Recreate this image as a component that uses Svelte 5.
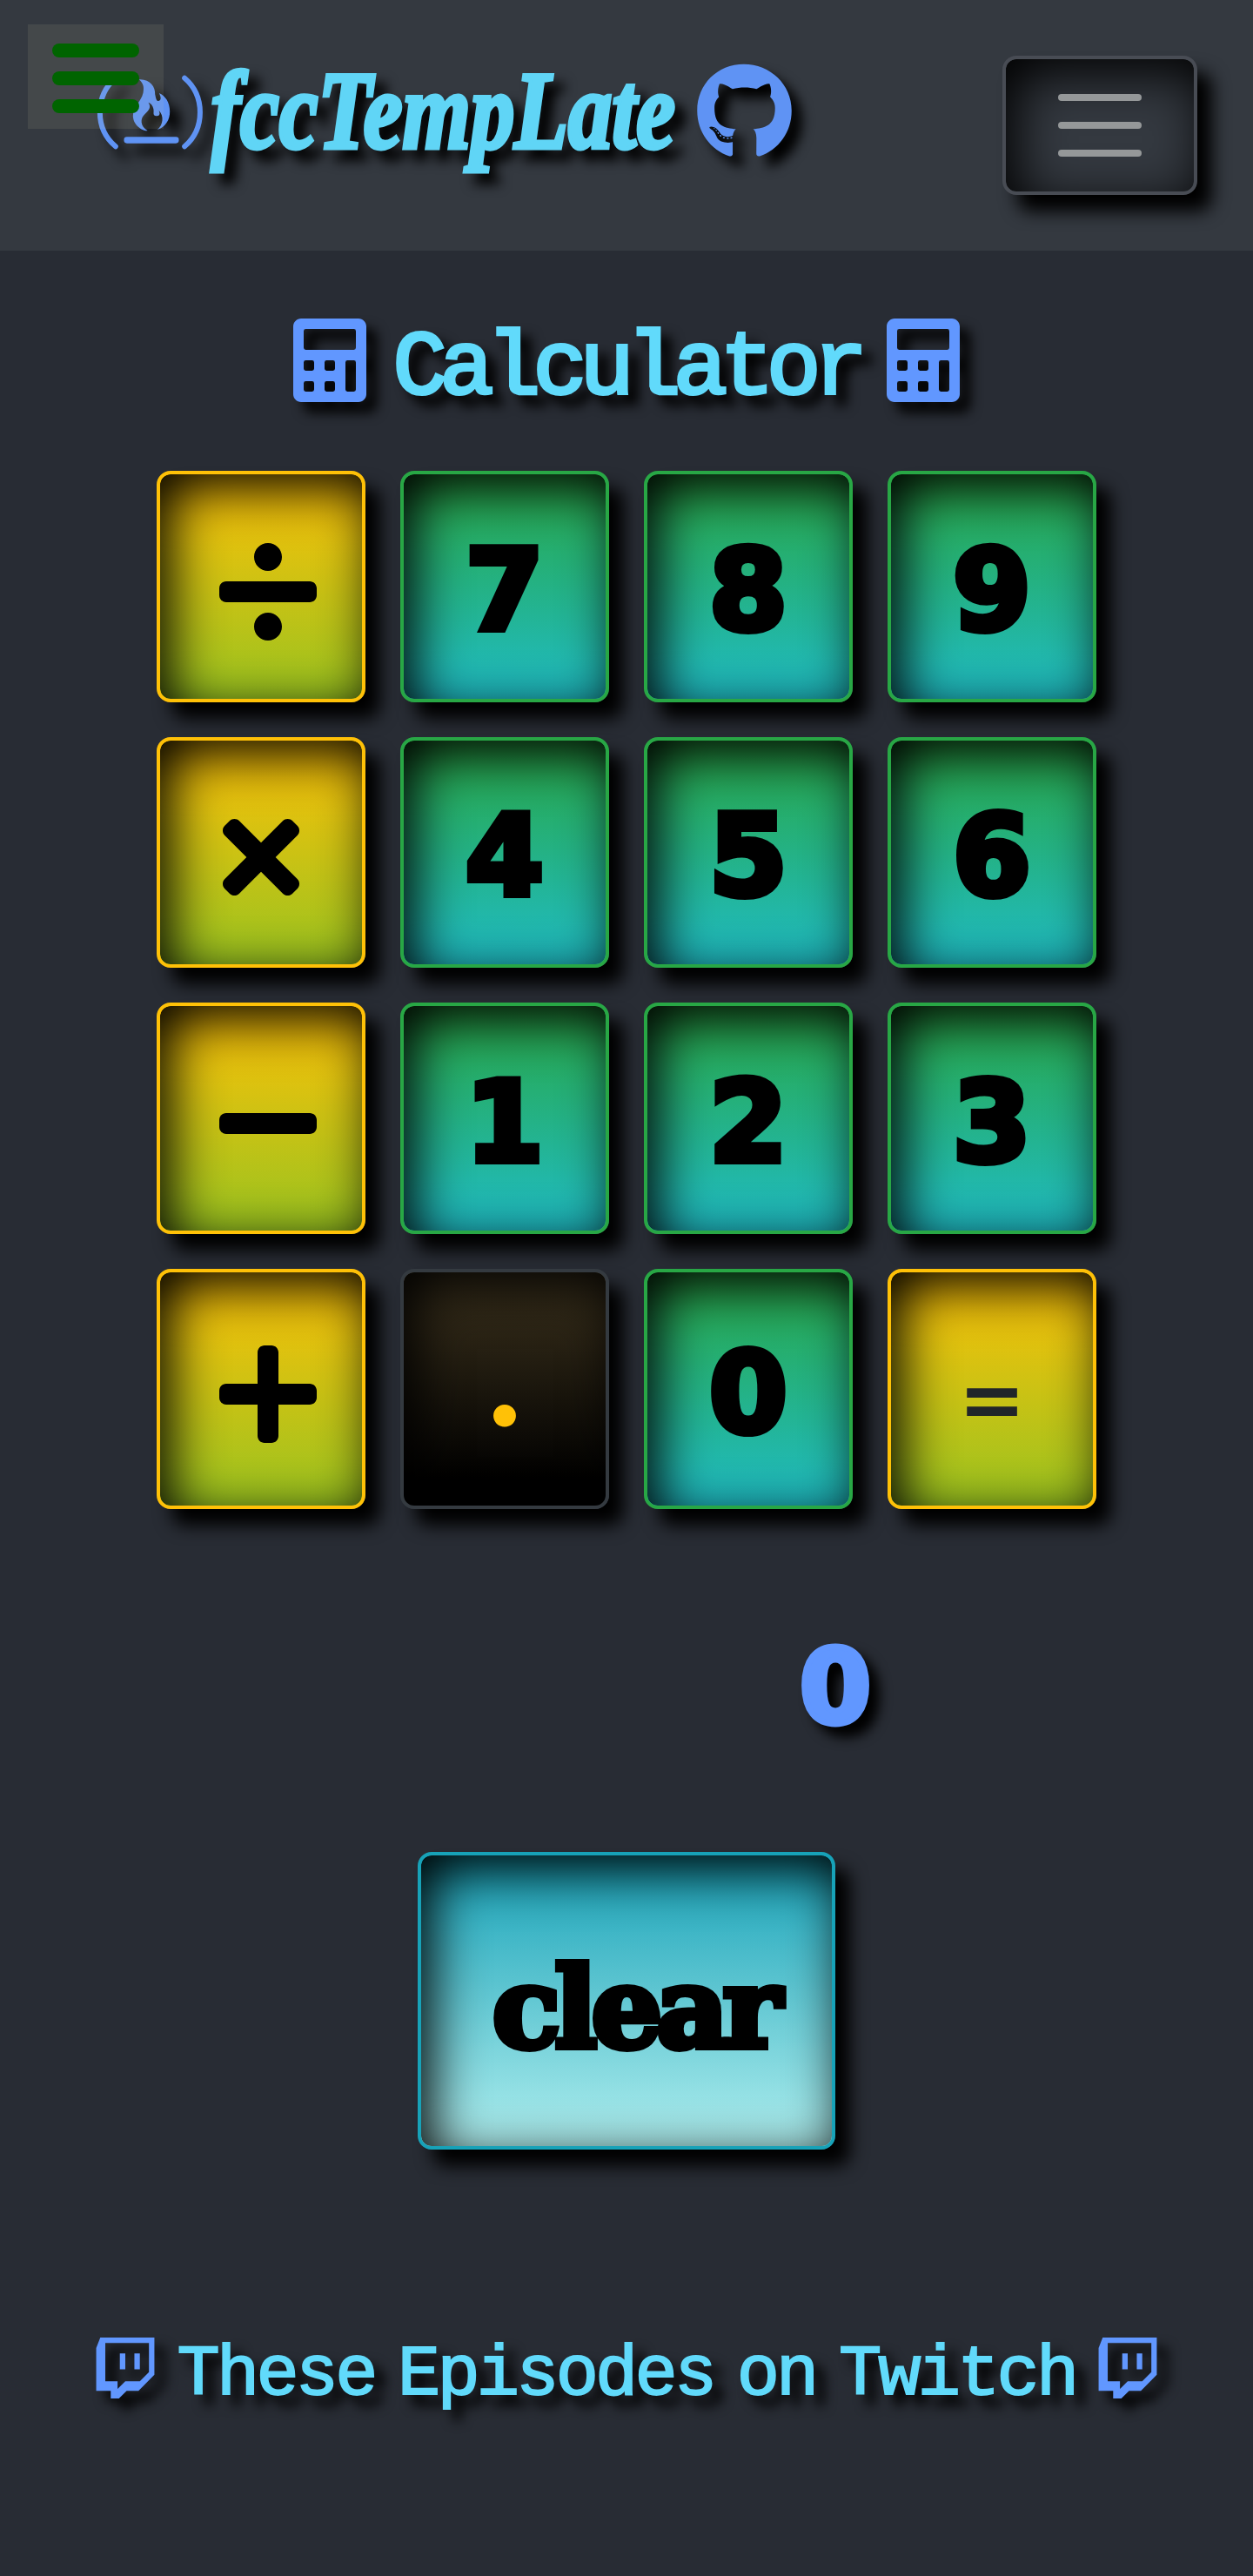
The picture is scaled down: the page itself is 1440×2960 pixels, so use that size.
<script>
  const DIVIDE =
    'M224 352c-35.35 0-64 28.65-64 64s28.65 64 64 64 64-28.65 64-64-28.65-64-64-64zm0-192c35.35 0 64-28.65 64-64s-28.65-64-64-64-64 28.65-64 64 28.65 64 64 64zm192 48H32c-17.67 0-32 14.33-32 32v32c0 17.67 14.33 32 32 32h384c17.67 0 32-14.33 32-32v-32c0-17.67-14.33-32-32-32z';
  const TIMES =
    'M242.72 256l100.07-100.07c12.28-12.28 12.28-32.19 0-44.48l-22.24-22.24c-12.28-12.28-32.19-12.28-44.48 0L176 189.28 75.93 89.21c-12.28-12.28-32.19-12.28-44.48 0L9.21 111.45c-12.28 12.28-12.28 32.19 0 44.48L109.28 256 9.21 356.07c-12.28 12.28-12.28 32.19 0 44.48l22.24 22.24c12.28 12.28 32.2 12.28 44.48 0L176 322.72l100.07 100.07c12.28 12.28 32.2 12.28 44.48 0l22.24-22.24c12.28-12.28 12.28-32.19 0-44.48L242.72 256z';
  const MINUS =
    'M416 208H32c-17.67 0-32 14.33-32 32v32c0 17.67 14.33 32 32 32h384c17.67 0 32-14.33 32-32v-32c0-17.67-14.33-32-32-32z';
  const PLUS =
    'M416 208H272V64c0-17.67-14.33-32-32-32h-32c-17.67 0-32 14.33-32 32v144H32c-17.67 0-32 14.33-32 32v32c0 17.67 14.33 32 32 32h144v144c0 17.67 14.33 32 32 32h32c17.67 0 32-14.33 32-32V304h144c17.67 0 32-14.33 32-32v-32c0-17.67-14.33-32-32-32z';

  const keys = [
    { kind: 'op', name: 'divide', icon: DIVIDE, width: 448 },
    { kind: 'digit', label: '7' },
    { kind: 'digit', label: '8' },
    { kind: 'digit', label: '9' },
    { kind: 'op', name: 'multiply', icon: TIMES, width: 352 },
    { kind: 'digit', label: '4' },
    { kind: 'digit', label: '5' },
    { kind: 'digit', label: '6' },
    { kind: 'op', name: 'subtract', icon: MINUS, width: 448 },
    { kind: 'digit', label: '1' },
    { kind: 'digit', label: '2' },
    { kind: 'digit', label: '3' },
    { kind: 'op', name: 'add', icon: PLUS, width: 448 },
    { kind: 'dot', label: '.' },
    { kind: 'digit', label: '0' },
    { kind: 'equals', label: '=' }
  ];
</script>

{#snippet calculatorIcon()}
  <svg class="calc-icon" viewBox="0 0 448 512" aria-hidden="true">
    <path
      fill-rule="evenodd"
      d="M400 0H48C22.4 0 0 22.4 0 48v416c0 25.6 22.4 48 48 48h352c25.6 0 48-22.4 48-48V48c0-25.6-22.4-48-48-48z
        M76.8 384h38.4q12.8 0 12.8 12.8v38.4q0 12.8-12.8 12.8H76.8q-12.8 0-12.8-12.8v-38.4q0-12.8 12.8-12.8z
        M76.8 256h38.4q12.8 0 12.8 12.8v38.4q0 12.8-12.8 12.8H76.8q-12.8 0-12.8-12.8v-38.4q0-12.8 12.8-12.8z
        M204.8 384h38.4q12.8 0 12.8 12.8v38.4q0 12.8-12.8 12.8h-38.4q-12.8 0-12.8-12.8v-38.4q0-12.8 12.8-12.8z
        M204.8 256h38.4q12.8 0 12.8 12.8v38.4q0 12.8-12.8 12.8h-38.4q-12.8 0-12.8-12.8v-38.4q0-12.8 12.8-12.8z
        M332.8 256h38.4q12.8 0 12.8 12.8v166.4q0 12.8-12.8 12.8h-38.4q-12.8 0-12.8-12.8V268.8q0-12.8 12.8-12.8z
        M76.8 64h294.4q12.8 0 12.8 12.8v102.4q0 12.8-12.8 12.8H76.8q-12.8 0-12.8-12.8V76.8q0-12.8 12.8-12.8z"
    />
  </svg>
{/snippet}

{#snippet twitchIcon()}
  <svg class="twitch-icon" viewBox="0 0 448 512" aria-hidden="true">
    <path
      d="M40.1 32L10 108.9v314.3h107V480h60.2l56.8-56.8h87l117-117V32H40.1zm357.8 254.1L331 353H224l-56.8 56.8V353H76.9V72.1h321v214zM331 149v116.9h-40.1V149H331zm-107 0v116.9h-40.1V149H224z"
    />
  </svg>
{/snippet}

<div class="page">
  <button class="drawer" aria-label="Open menu"><i></i><i></i><i></i></button>

  <header>
    <a class="brand" href="#top">
      <svg class="camp" viewBox="328.5 219 378 336" aria-hidden="true">
        <path class="line" d="M397 269C325 330 325 444 397 505" />
        <path class="line" d="M635 269C706 330 706 444 635 505" />
        <rect x="426" y="472" width="189" height="22" rx="10" />
        <path
          d="M478 274C515 272 535 300 533 325C536 338 537 347 543 348C553 349 556 338 547 321C568 330 584 352 584 384C585 412 568 440 541 447C561 430 565 400 546 380C549 388 552 396 543 399C532 401 527 398 528 387C530 373 523 358 510 353C521 369 512 380 499 392C480 408 482 435 507 450C502 455 458 440 457 400C456 372 485 350 492 320C496 300 493 288 478 274z"
        />
      </svg>
      <span class="brand-text"><span class="brand-word">fccTempLate</span></span>
      <svg class="github" viewBox="0 0 496 512" aria-hidden="true">
        <path
          d="M165.9 397.4c0 2-2.3 3.6-5.2 3.6-3.3.3-5.6-1.3-5.6-3.6 0-2 2.3-3.6 5.2-3.6 3-.3 5.6 1.3 5.6 3.6zm-31.1-4.5c-.7 2 1.3 4.3 4.3 4.9 2.6 1 5.6 0 6.2-2s-1.3-4.3-4.3-5.2c-2.6-.7-5.5.3-6.2 2.3zm44.2-1.7c-2.9.7-4.9 2.6-4.6 4.9.3 2 2.9 3.3 5.9 2.6 2.9-.7 4.9-2.6 4.6-4.6-.3-1.9-3-3.2-5.9-2.9zM244.8 8C106.1 8 0 113.3 0 252c0 110.9 69.8 205.8 169.5 239.2 12.8 2.3 17.3-5.6 17.3-12.1 0-6.2-.3-40.4-.3-61.4 0 0-70 15-84.7-29.8 0 0-11.4-29.1-27.8-36.6 0 0-22.9-15.7 1.6-15.4 0 0 24.9 2 38.6 25.8 21.9 38.6 58.6 27.5 72.9 20.9 2.3-16 8.8-27.1 16-33.7-55.9-6.2-112.3-14.3-112.3-110.5 0-27.5 7.6-41.3 23.6-58.9-2.6-6.5-11.1-33.3 2.6-67.9 20.9-6.5 69 27 69 27 20-5.6 41.5-8.5 62.8-8.5s42.8 2.9 62.8 8.5c0 0 48.1-33.6 69-27 13.7 34.7 5.2 61.4 2.6 67.9 16 17.7 25.8 31.5 25.8 58.9 0 96.5-58.9 104.2-114.8 110.5 9.2 7.9 17 22.9 17 46.4 0 33.7-.3 75.4-.3 83.6 0 6.5 4.6 14.4 17.3 12.1C428.2 457.8 496 362.9 496 252 496 113.3 383.5 8 244.8 8zM97.2 352.9c-1.3 1-1 3.3.7 5.2 1.6 1.6 3.9 2.3 5.2 1 1.3-1 1-3.3-.7-5.2-1.6-1.6-3.9-2.3-5.2-1zm-10.8-8.1c-.7 1.3.3 2.9 2.3 3.9 1.6 1 3.6.7 4.3-.7.7-1.3-.3-2.9-2.3-3.9-2-.6-3.6-.3-4.3.7zm32.4 35.6c-1.6 1.3-1 4.3 1.3 6.2 2.3 2.3 5.2 2.6 6.5 1 1.3-1.3.7-4.3-1.3-6.2-2.2-2.3-5.2-2.6-6.5-1zm-11.4-14.7c-1.6 1-1.6 3.6 0 5.9 1.6 2.3 4.3 3.3 5.6 2.3 1.6-1.3 1.6-3.9 0-6.2-1.4-2.3-4-3.3-5.6-2z"
        />
      </svg>
    </a>
    <button class="toggler" aria-label="Toggle navigation"><i></i><i></i><i></i></button>
  </header>

  <main>
    <h1>{@render calculatorIcon()}<span>Calculator</span>{@render calculatorIcon()}</h1>

    <div class="keypad">
      {#each keys as key}
        <button class="key {key.kind}" aria-label={key.name ?? key.label}>
          {#if key.icon}
            <svg class:narrow={key.width === 352} viewBox="0 0 {key.width} 512"><path d={key.icon} /></svg>
          {:else}
            <span>{key.label}</span>
          {/if}
        </button>
      {/each}
    </div>

    <output>0</output>

    <button class="clear"><span>clear</span></button>
  </main>

  <footer>{@render twitchIcon()}<span>These Episodes on Twitch</span>{@render twitchIcon()}</footer>
</div>

<style>
  :global(body) {
    margin: 0;
    background: #282c34;
  }

  .page {
    position: relative;
    box-sizing: border-box;
    width: 1440px;
    height: 2960px;
    overflow: hidden;
    background: #282c34;
    --blue: #6197ff;
    --cyan: #61dafb;
    --lift: drop-shadow(12px 12px 7px #000);
    --bevel: 17px 19px 20px #000, inset 12px 16px 60px #000;
  }

  button {
    display: flex;
    box-sizing: border-box;
    margin: 0;
    padding: 0;
    border: 4px solid;
    border-radius: 16px;
    color: #000;
  }

  svg {
    display: block;
    flex: none;
    overflow: visible;
  }

  /* Drawer trigger floats over the header */
  .drawer {
    position: absolute;
    z-index: 2;
    top: 28px;
    left: 32px;
    flex-direction: column;
    gap: 16px;
    width: 156px;
    height: 120px;
    padding: 22px 28px;
    border: 0;
    border-radius: 0;
    background: rgba(212, 207, 164, 0.1);
  }

  .drawer i {
    height: 16px;
    flex: none;
    border-radius: 8px;
    background: #006400;
  }

  header {
    display: flex;
    box-sizing: border-box;
    justify-content: space-between;
    align-items: flex-start;
    height: 288px;
    padding: 64px 64px 0 110px;
    background: #343940;
  }

  .brand {
    display: flex;
    padding-top: 8px;
    text-decoration: none;
    fill: #5f93f4;
    filter: var(--lift);
  }

  .camp {
    width: 126px;
    height: 112px;
    margin-top: 1px;
  }

  .line {
    fill: none;
    stroke: #5f93f4;
    stroke-width: 18;
    stroke-linecap: round;
  }

  .brand-text {
    width: 565px;
    height: 112px;
  }

  .brand-word {
    display: block;
    width: max-content;
    padding-left: 8px;
    color: #60d5f6;
    font: italic 700 126px/112px 'Liberation Serif', serif;
    -webkit-text-stroke: 5px #60d5f6;
    transform: scaleX(0.8);
    transform-origin: 0 50%;
  }

  .github {
    width: 109px;
    height: 112px;
  }

  .toggler {
    flex-direction: column;
    justify-content: center;
    align-items: center;
    gap: 24px;
    width: 224px;
    height: 160px;
    border-color: #484c54;
    background: #343940;
    box-shadow: var(--bevel);
  }

  .toggler i {
    width: 96px;
    height: 8px;
    border-radius: 4px;
    background: #959899;
  }

  main {
    display: flex;
    flex-direction: column;
    align-items: center;
  }

  h1 {
    display: flex;
    justify-content: space-between;
    width: 766px;
    height: 96px;
    margin: 78px 0 79px;
    color: var(--cyan);
    fill: var(--blue);
    font: 400 104px/96px 'Liberation Mono', monospace;
    letter-spacing: -8.7px;
    -webkit-text-stroke: 4px var(--cyan);
    filter: var(--lift);
  }

  h1 span {
    padding-top: 10px;
  }

  .calc-icon {
    width: 84px;
    height: 96px;
  }

  .keypad {
    display: grid;
    grid-template-columns: repeat(4, 240px);
    grid-template-rows: repeat(3, 265.6px) 276px;
    gap: 40px;
  }

  .key {
    justify-content: center;
    align-items: center;
    box-shadow: var(--bevel);
  }

  .op,
  .equals {
    border-color: #ffc107;
    background: linear-gradient(#ffc107, #99c320);
  }

  .op svg {
    width: 112px;
    height: 128px;
    margin: 12px 0 0 16px;
  }

  .op svg.narrow {
    width: 88px;
    margin-left: 0;
  }

  .digit {
    padding-top: 8px;
    border-color: #28a745;
    background: linear-gradient(#28a745, #20bcc4);
    font: 700 129px/134px 'DejaVu Sans', sans-serif;
    -webkit-text-stroke: 8px #000;
  }

  .dot {
    padding-bottom: 18px;
    border-color: #343a40;
    background: linear-gradient(#3c321d, #000 90%);
    color: #ffc107;
    font: 900 128px/128px Lato, sans-serif;
    -webkit-text-stroke: 5px #ffc107;
  }

  .equals {
    padding-top: 26px;
    color: #212529;
    font: 700 92px/92px 'DejaVu Sans', sans-serif;
  }

  output {
    width: 80px;
    height: 96px;
    margin: 156px 0 142px 478px;
    color: var(--blue);
    font: 700 118px/96px 'DejaVu Sans', sans-serif;
    -webkit-text-stroke: 7px var(--blue);
    filter: var(--lift);
  }

  .clear {
    justify-content: center;
    width: 480px;
    height: 342px;
    padding: 105px 0 0 18px;
    border-color: #17a2b8;
    background: linear-gradient(#17a2b8, #afeeee);
    box-shadow: var(--bevel);
    font: 700 128px/140px 'DejaVu Serif', serif;
    letter-spacing: -6.5px;
    -webkit-text-stroke: 8px #000;
  }

  footer {
    display: flex;
    justify-content: space-between;
    width: 1223px;
    height: 80px;
    margin: 211px auto 0;
    color: var(--cyan);
    fill: var(--blue);
    font: 400 82px/80px 'Liberation Mono', monospace;
    letter-spacing: -3.8px;
    word-spacing: -19px;
    white-space: nowrap;
    -webkit-text-stroke: 2px var(--cyan);
    filter: var(--lift);
  }

  footer span {
    padding-top: 9px;
  }

  .twitch-icon {
    width: 70px;
    height: 80px;
  }

  .calc-icon,
  .twitch-icon {
    stroke: none;
  }
</style>
